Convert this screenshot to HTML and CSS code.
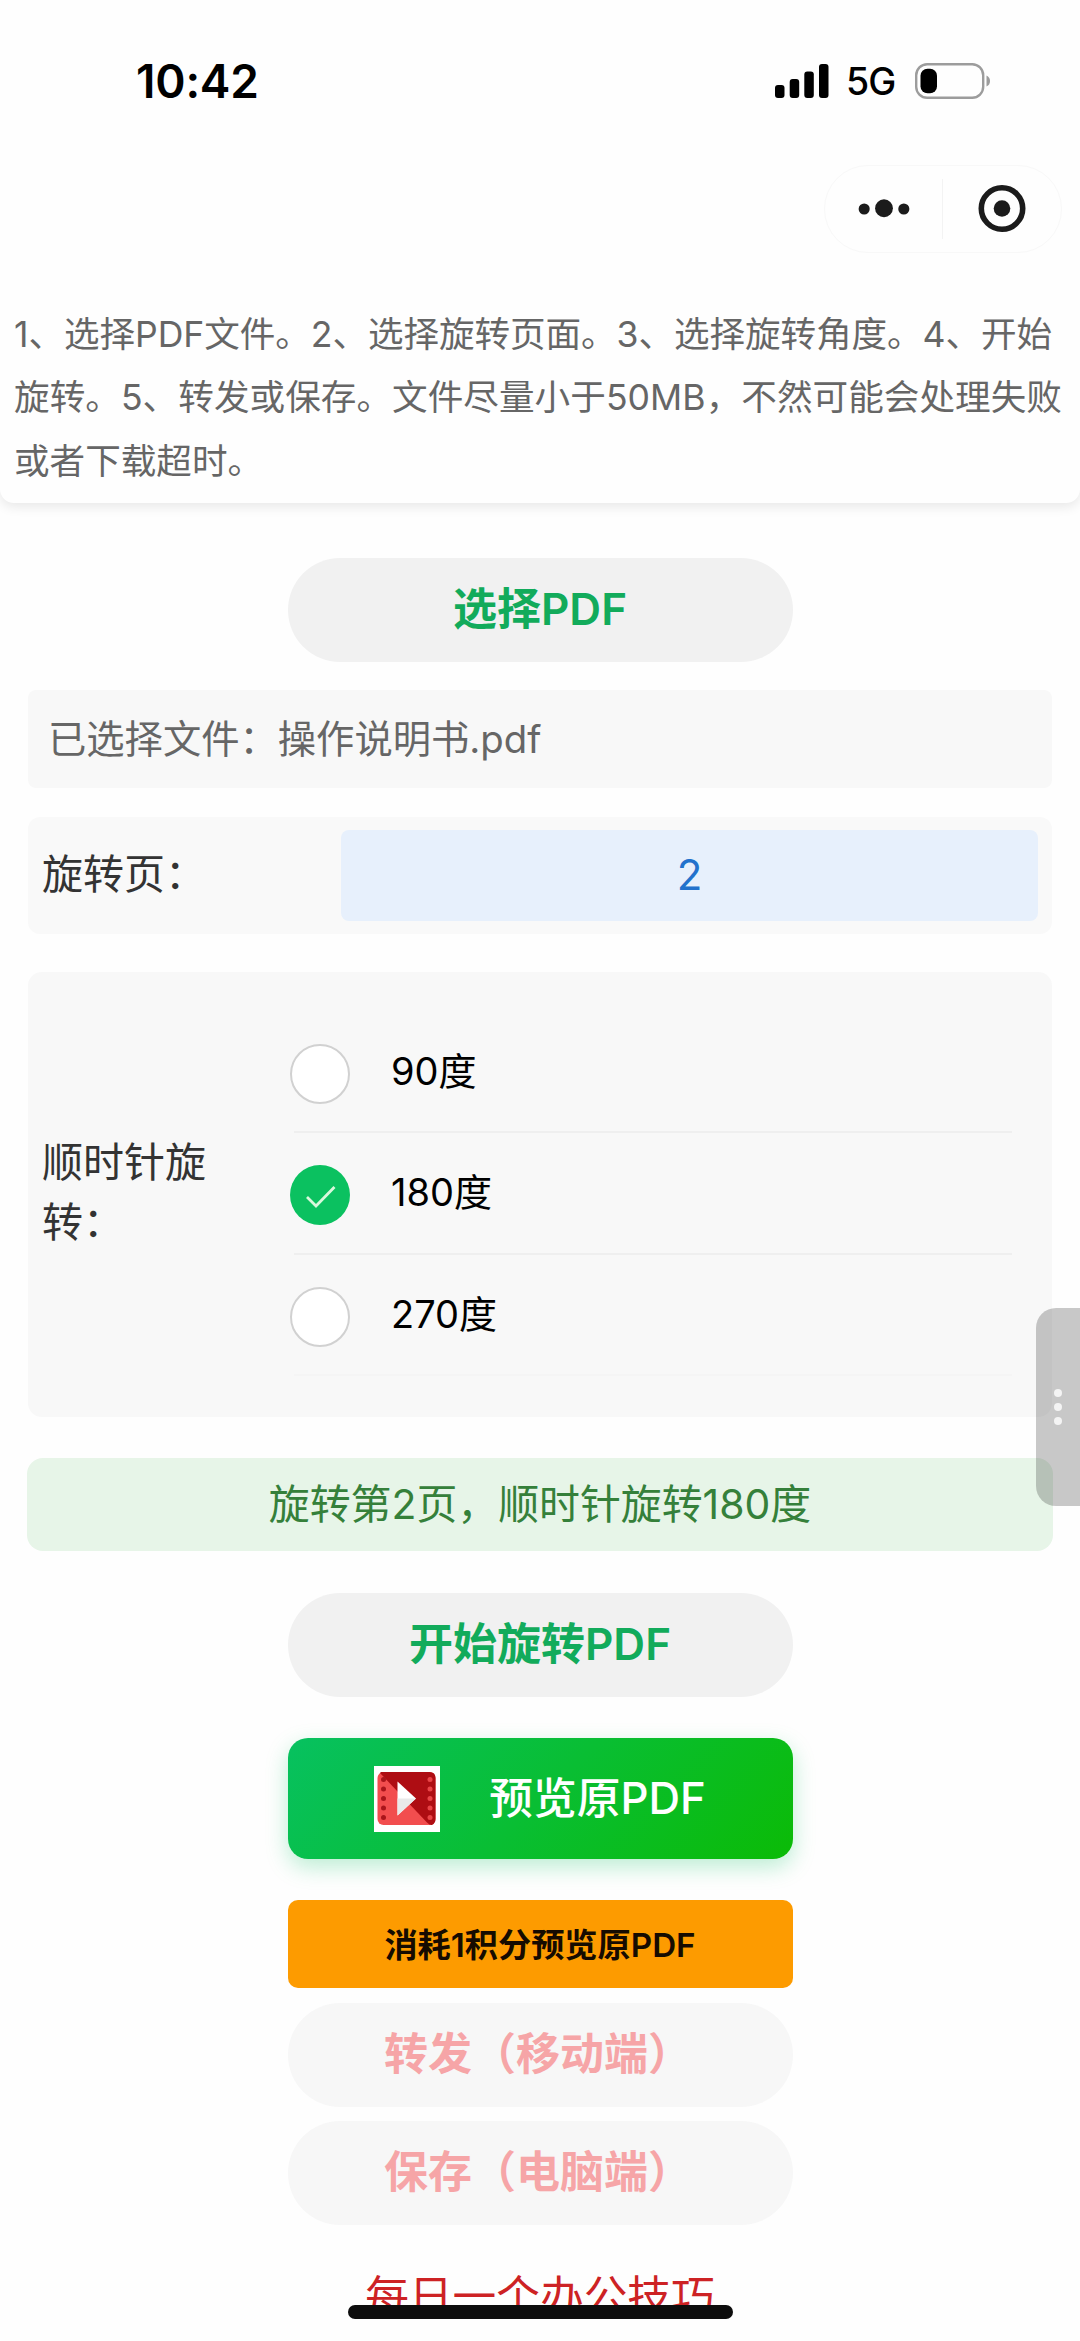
FILE: index.html
```html
<!DOCTYPE html>
<html lang="zh-CN">
<head>
<meta charset="utf-8">
<title>PDF旋转</title>
<link rel="stylesheet" href="styles.css">
</head>
<body>
<div class="screen">
  <header class="status">
    <span class="time">10:42</span>
    <div class="indicators">
      <svg class="signal" width="54" height="34" viewBox="0 0 54 34"><rect x="0" y="21" width="9.5" height="13" rx="3"/><rect x="14.7" y="15" width="9.5" height="19" rx="3"/><rect x="29.3" y="7.5" width="9.5" height="26.500" rx="3"/><rect x="44" y="0" width="9.500" height="34" rx="3"/></svg>
      <span class="network">5G</span>
      <svg class="battery" width="76" height="36" viewBox="0 0 76 36"><rect x="1.200" y="1.200" width="67" height="33.600" rx="11" fill="none" stroke="#9c9c9c" stroke-width="2.400"/><rect x="5.500" y="5.800" width="16.500" height="24.500" rx="7" fill="#000"/><path d="M71.500 12.500Q75 14 75 18T71.500 23.500Z" fill="#9c9c9c"/></svg>
    </div>
  </header>
  <nav class="navbar">
    <div class="capsule">
      <svg class="more" width="118" height="60" viewBox="0 0 118 60"><circle cx="39.500" cy="30" r="5.600"/><circle cx="59.500" cy="29.200" r="9"/><circle cx="79.500" cy="30" r="5.600"/></svg>
      <svg class="close" width="117" height="60" viewBox="0 0 117 60"><circle cx="59" cy="29.500" r="20.700" fill="none" stroke="#1b1b1b" stroke-width="5.600"/><circle cx="59" cy="29.500" r="8.300"/></svg>
    </div>
  </nav>

  <section class="notice">
    <p class="notice-line l1">1、选择PDF文件。2、选择旋转页面。3、选择旋转角度。4、开始</p>
    <p class="notice-line l2">旋转。5、转发或保存。文件尽量小于50MB，不然可能会处理失败</p>
    <p class="notice-line">或者下载超时。</p>
  </section>

  <main class="content">
    <button class="btn pill pick">选择PDF</button>
    <div class="file">已选择文件：操作说明书.pdf</div>
    <div class="page-row">
      <span class="label">旋转页：</span>
      <div class="page-input">2</div>
    </div>
    <div class="angle">
      <span class="label">顺时针旋转：</span>
      <div class="options">
        <div class="option"><i class="radio"></i><span>90度</span></div>
        <div class="option"><i class="radio checked"><svg width="60" height="60" viewBox="0 0 60 60"><path d="M17 32L26 41L44.500 22" fill="none" stroke="#d9f8dc" stroke-width="2.800"/></svg></i><span>180度</span></div>
        <div class="option"><i class="radio"></i><span>270度</span></div>
      </div>
    </div>
    <div class="summary">旋转第2页，顺时针旋转180度</div>
    <button class="btn pill start">开始旋转PDF</button>
    <button class="btn preview">
      <svg class="film" width="66" height="66" viewBox="0 0 66 66">
        <rect width="66" height="66" fill="#fff"/>
        <rect x="3.500" y="6" width="58" height="53" rx="6" fill="#f24d4e"/>
        <path d="M7 6H55.500Q61.500 6 61.500 12V53Q61.500 57 58 59Q56 59.500 53 56.500L6 7Z" fill="#ae0d13"/>
        <g fill="#a9151b"><circle cx="9.500" cy="13.500" r="2.500"/><circle cx="9.500" cy="23" r="2.500"/><circle cx="9.500" cy="32.500" r="2.500"/><circle cx="9.500" cy="42" r="2.500"/><circle cx="9.500" cy="51.500" r="2.500"/></g>
        <g fill="#e94447"><circle cx="56" cy="13.500" r="2.500"/><circle cx="56" cy="23" r="2.500"/><circle cx="56" cy="32.500" r="2.500"/><circle cx="56" cy="42" r="2.500"/><circle cx="56" cy="51.500" r="2.500"/></g>
        <path d="M23.500 15.500L42 32.500L23.500 49.500Z" fill="#fff"/><path d="M23.500 32.500H42L23.500 49.500Z" fill="#e9e9e9"/>
      </svg>
      <span>预览原PDF</span>
    </button>
    <button class="btn points">消耗1积分预览原PDF</button>
    <button class="btn pill disabled forward">转发（移动端）</button>
    <button class="btn pill disabled save">保存（电脑端）</button>
    <p class="tip">每日一个办公技巧</p>
  </main>

  <aside class="handle"><i></i><i></i><i></i></aside>
  <div class="home-bar"></div>
</div>
</body>
</html>
```
FILE: styles.css
```css
* { box-sizing: border-box; margin: 0; padding: 0; }
body { background: #fefefe; font-family: Inter, "Noto Sans CJK SC", sans-serif; }
.screen { position: relative; width: 1080px; height: 2341px; overflow: hidden; display: flex; flex-direction: column; }
svg { display: block; flex: none; }

.status { height: 161px; flex: none; padding: 0 89px 0 136px; display: flex; align-items: center; justify-content: space-between; }
.time { font-size: 46px; font-weight: 600; line-height: 56px; letter-spacing: -0.2px; color: #000; }
.indicators { display: flex; align-items: center; }
.network { margin-left: 17px; width: 53px; font-size: 37.5px; font-weight: 500; line-height: 48px; letter-spacing: -1px; white-space: nowrap; margin-top: 3px; }
.battery { margin-left: 16px; }

.navbar { height: 119px; flex: none; padding: 4px 18px 0; display: flex; justify-content: flex-end; }
.capsule { width: 238px; height: 88px; border: 1px solid #f8f8f8; border-radius: 45px; display: flex; align-items: center; fill: #1b1b1b; }
.more { border-right: 1px solid #f3f3f3; }

.notice { height: 223px; flex: none; padding: 23px 14px 0; border-radius: 0 0 14px 14px; background: #fefefe; box-shadow: 0 4px 12px rgba(0, 0, 0, .09); clip-path: inset(0 0 -20px 0); color: #666; }
.notice-line { font-size: 35.6px; line-height: 63.4px; white-space: nowrap; }
.l1 { letter-spacing: -0.06px; }
.l2 { letter-spacing: 0.06px; }

.content { flex: none; padding: 55px 28px 0; display: flex; flex-direction: column; align-items: center; }
.content > * { flex: none; }
.btn { width: 505px; border: 0; font-family: inherit; display: flex; align-items: center; justify-content: center; white-space: nowrap; }
.pill { height: 104px; border-radius: 52px; background: #f1f1f1; color: #12ab5b; font-size: 44px; font-weight: 600; padding-bottom: 8px; }
.file { width: 100%; height: 98px; margin-top: 28px; padding-left: 20px; border-radius: 8px; background: #f8f8f8; color: #666; font-size: 38.3px; line-height: 98px; white-space: nowrap; }
.page-row { width: 100%; height: 117px; margin-top: 29px; padding: 0 14px; border-radius: 12px; background: #f9f9f9; display: flex; align-items: center; justify-content: space-between; }
.label { font-size: 41px; line-height: 60px; color: #333; }
.page-row .label { padding-bottom: 3px; }
.page-input { width: 697px; height: 91px; border-radius: 8px; background: #e7f0fc; color: #2272cc; font-size: 42px; line-height: 89px; text-align: center; }
.angle { width: 100%; height: 445px; margin-top: 38px; padding: 0 14px; border-radius: 14px; background: #f8f8f8; display: flex; align-items: center; }
.angle .label { width: 190px; margin-right: 62px; padding-bottom: 5px; }
.options { width: 718px; padding-bottom: 1px; }
.option { height: 121.400px; border-bottom: 2px solid #efefef; display: flex; align-items: center; color: #000; font-size: 38px; }
.option:last-child { border-color: #f5f5f5; }
.option span { margin-left: 41px; line-height: 56px; padding-bottom: 1px; }
.radio { width: 60px; height: 60px; margin: 5px 0 0 -4px; border: 2.500px solid #d1d1d1; border-radius: 50%; background: #fff; }
.checked { border: 0; background: #0bc160; }
.summary { width: 1026px; height: 93px; margin-top: 41px; border-radius: 16px; background: #e7f5e8; color: #35803a; font-size: 40.9px; line-height: 92px; text-align: center; }
.start { margin-top: 42px; }
.preview { height: 121px; margin-top: 41px; border-radius: 20px; background: linear-gradient(135deg, #07c160, #0bbb06); box-shadow: 0 8px 22px rgba(7, 193, 96, .27); color: #fff; font-size: 43.7px; font-weight: 500; }
.preview span { margin-left: 49px; padding-bottom: 7px; }
.points { height: 88px; margin-top: 41px; border-radius: 10px; background: #fd9b00; color: #160b00; font-size: 33.2px; font-weight: 600; padding-bottom: 4px; }
.disabled { background: #f7f7f7; color: #f6a5a7; padding-right: 4px; }
.forward { margin-top: 15px; }
.save { margin-top: 14px; }
.tip { margin-top: 42px; color: #cd2224; font-size: 43.7px; line-height: 60px; }

.handle { position: absolute; right: 0; top: 1308px; width: 44px; height: 198px; border-radius: 20px 0 0 20px; background: rgba(0, 0, 0, .21); display: flex; flex-direction: column; align-items: center; justify-content: center; gap: 5.500px; }
.handle i { width: 8.500px; height: 8.500px; border-radius: 50%; background: #f4f4f4; }
.home-bar { position: absolute; left: 348px; top: 2305px; width: 385px; height: 14px; border-radius: 7px; background: #0d0d0d; }
```
